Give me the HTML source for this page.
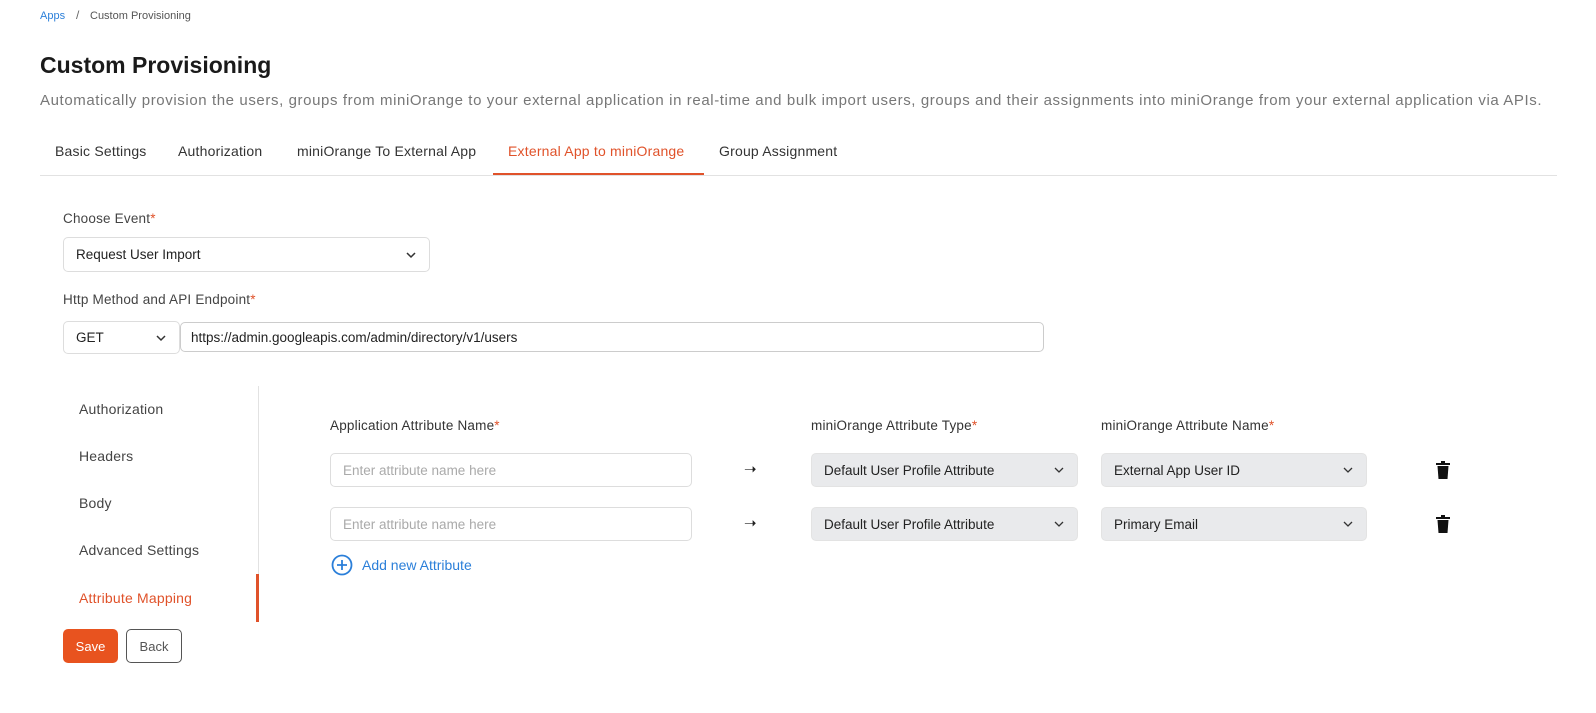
<!DOCTYPE html>
<html><head><style>
*{box-sizing:border-box;margin:0;padding:0}
body{width:1596px;height:713px;background:#fff;font-family:"Liberation Sans",sans-serif;color:#222;position:relative;overflow:hidden}
.a{position:absolute;white-space:nowrap}
.req{color:#e0522a}
.box{position:absolute;border:1px solid #ddd;border-radius:5px;background:#fff;font-size:13.5px;color:#222;display:flex;align-items:center;padding-left:12px}
.grey{background:#e9eaec;border-color:#e3e3e3}
.chev{position:absolute;right:12px;top:50%;margin-top:-6px}
.tab{position:absolute;top:143px;font-size:14px;color:#333;letter-spacing:.2px}
.side{position:absolute;left:79px;font-size:14px;color:#444;letter-spacing:.2px}
.lbl{font-size:13.5px;color:#444;letter-spacing:.2px}
</style></head><body>
<div class="a" style="left:40px;top:10px;font-size:11px;color:#2b7fd9">Apps</div>
<div class="a" style="left:76px;top:8px;font-size:12px;color:#666">/</div>
<div class="a" style="left:90px;top:10px;font-size:11px;color:#555">Custom Provisioning</div>
<div class="a" style="left:40px;top:52px;font-size:23px;font-weight:bold;color:#1a1a1a">Custom Provisioning</div>
<div class="a" style="left:40px;top:92px;font-size:15px;letter-spacing:.6px;color:#777">Automatically provision the users, groups from miniOrange to your external application in real-time and bulk import users, groups and their assignments into miniOrange from your external application via APIs.</div>
<div class="tab" style="left:55px">Basic Settings</div>
<div class="tab" style="left:178px">Authorization</div>
<div class="tab" style="left:297px">miniOrange To External App</div>
<div class="tab" style="left:508px;color:#e0522a">External App to miniOrange</div>
<div class="tab" style="left:719px">Group Assignment</div>
<div class="a" style="left:40px;top:175px;width:1517px;height:1px;background:#e2e2e2"></div>
<div class="a" style="left:493px;top:173px;width:211px;height:2px;background:#e0522a"></div>
<div class="a lbl" style="left:63px;top:211px">Choose Event<span class="req">*</span></div>
<div class="box" style="left:63px;top:237px;width:367px;height:35px">Request User Import<svg class="chev" width="12" height="12" viewBox="0 0 12 12"><path d="M2 4l4 4 4-4" fill="none" stroke="#333" stroke-width="1.5"/></svg></div>
<div class="a lbl" style="left:63px;top:292px">Http Method and API Endpoint<span class="req">*</span></div>
<div class="box" style="left:63px;top:321px;width:117px;height:33px">GET<svg class="chev" width="12" height="12" viewBox="0 0 12 12"><path d="M2 4l4 4 4-4" fill="none" stroke="#333" stroke-width="1.5"/></svg></div>
<div class="box" style="left:180px;top:322px;width:864px;height:30px;border-color:#ccc;padding-left:10px">https://admin.googleapis.com/admin/directory/v1/users</div>
<div class="side" style="top:401px">Authorization</div>
<div class="side" style="top:448px">Headers</div>
<div class="side" style="top:495px">Body</div>
<div class="side" style="top:542px">Advanced Settings</div>
<div class="side" style="top:590px;color:#e0522a">Attribute Mapping</div>
<div class="a" style="left:258px;top:386px;width:1px;height:236px;background:#e2e2e2"></div>
<div class="a" style="left:256px;top:574px;width:3px;height:48px;background:#e0522a"></div>
<div class="a lbl" style="left:330px;top:418px;color:#333">Application Attribute Name<span class="req">*</span></div>
<div class="a lbl" style="left:811px;top:418px;color:#333">miniOrange Attribute Type<span class="req">*</span></div>
<div class="a lbl" style="left:1101px;top:418px;color:#333">miniOrange Attribute Name<span class="req">*</span></div>
<div class="box" style="left:330px;top:453px;width:362px;height:34px;color:#aaa">Enter attribute name here</div>
<div class="box" style="left:330px;top:507px;width:362px;height:34px;color:#aaa">Enter attribute name here</div>
<div class="a" style="left:744px;top:460px;font-size:15px">&#10141;</div>
<div class="a" style="left:744px;top:514px;font-size:15px">&#10141;</div>
<div class="box grey" style="left:811px;top:453px;width:267px;height:34px">Default User Profile Attribute<svg class="chev" width="12" height="12" viewBox="0 0 12 12"><path d="M2 4l4 4 4-4" fill="none" stroke="#333" stroke-width="1.3"/></svg></div>
<div class="box grey" style="left:811px;top:507px;width:267px;height:34px">Default User Profile Attribute<svg class="chev" width="12" height="12" viewBox="0 0 12 12"><path d="M2 4l4 4 4-4" fill="none" stroke="#333" stroke-width="1.3"/></svg></div>
<div class="box grey" style="left:1101px;top:453px;width:266px;height:34px">External App User ID<svg class="chev" width="12" height="12" viewBox="0 0 12 12"><path d="M2 4l4 4 4-4" fill="none" stroke="#333" stroke-width="1.3"/></svg></div>
<div class="box grey" style="left:1101px;top:507px;width:266px;height:34px">Primary Email<svg class="chev" width="12" height="12" viewBox="0 0 12 12"><path d="M2 4l4 4 4-4" fill="none" stroke="#333" stroke-width="1.3"/></svg></div>
<svg class="a" style="left:1436px;top:461px" width="14" height="18" viewBox="0 0 14 18"><rect x="0" y="2" width="14" height="2" fill="#111"/><rect x="5" y="0" width="4" height="2" fill="#111"/><path d="M1.5 5h11l-1 13h-9z" fill="#111"/></svg>
<svg class="a" style="left:1436px;top:515px" width="14" height="18" viewBox="0 0 14 18"><rect x="0" y="2" width="14" height="2" fill="#111"/><rect x="5" y="0" width="4" height="2" fill="#111"/><path d="M1.5 5h11l-1 13h-9z" fill="#111"/></svg>
<svg class="a" style="left:331px;top:554px" width="22" height="22" viewBox="0 0 22 22"><circle cx="11" cy="11" r="9.5" fill="none" stroke="#2b7fd9" stroke-width="1.8"/><path d="M11 6v10M6 11h10" stroke="#2b7fd9" stroke-width="1.8"/></svg>
<div class="a" style="left:362px;top:557px;font-size:14px;color:#2b7fd9">Add new Attribute</div>
<div class="a" style="left:63px;top:629px;width:55px;height:34px;background:#e8531f;border-radius:5px;color:#fff;font-size:13px;display:flex;align-items:center;justify-content:center">Save</div>
<div class="a" style="left:126px;top:629px;width:56px;height:34px;border:1px solid #555;border-radius:5px;color:#555;font-size:13px;display:flex;align-items:center;justify-content:center">Back</div>
</body></html>
